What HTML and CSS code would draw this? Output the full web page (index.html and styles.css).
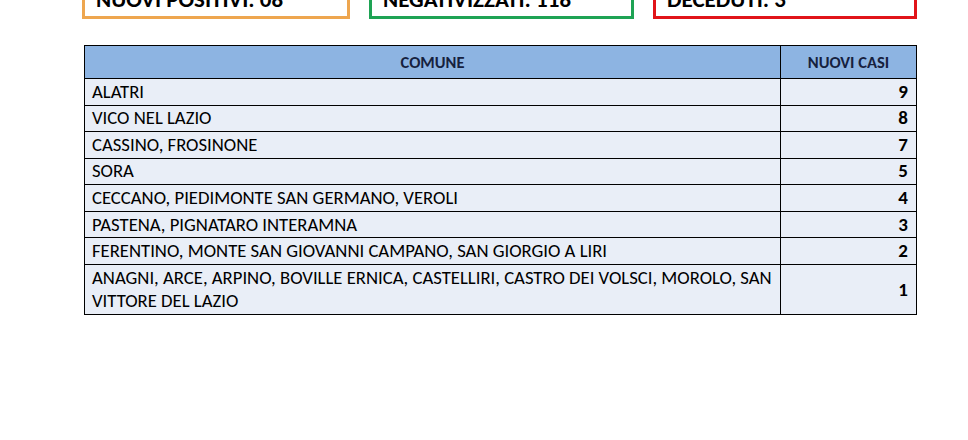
FILE: index.html
```html
<!DOCTYPE html>
<html lang="it">
<head>
<meta charset="utf-8">
<title>Nuovi casi per comune</title>
<link rel="stylesheet" href="styles.css">
</head>
<body>
<div class="page">
  <div class="boxes">
    <div class="box box-orange">NUOVI POSITIVI: 08</div>
    <div class="box box-green">NEGATIVIZZATI: 118</div>
    <div class="box box-red">DECEDUTI: 3</div>
  </div>
  <table class="cases">
    <colgroup><col class="col-name"><col class="col-num"></colgroup>
    <thead>
      <tr><th>COMUNE</th><th>NUOVI CASI</th></tr>
    </thead>
    <tbody>
      <tr><td>ALATRI</td><td class="num">9</td></tr>
      <tr><td>VICO NEL LAZIO</td><td class="num">8</td></tr>
      <tr><td>CASSINO, FROSINONE</td><td class="num">7</td></tr>
      <tr><td>SORA</td><td class="num">5</td></tr>
      <tr><td>CECCANO, PIEDIMONTE SAN GERMANO, VEROLI</td><td class="num">4</td></tr>
      <tr><td>PASTENA, PIGNATARO INTERAMNA</td><td class="num">3</td></tr>
      <tr><td>FERENTINO, MONTE SAN GIOVANNI CAMPANO, SAN GIORGIO A LIRI</td><td class="num">2</td></tr>
      <tr class="tall"><td>ANAGNI, ARCE, ARPINO, BOVILLE ERNICA, CASTELLIRI, CASTRO DEI VOLSCI, MOROLO, SAN VITTORE DEL LAZIO</td><td class="num">1</td></tr>
    </tbody>
  </table>
</div>
</body>
</html>
```
FILE: styles.css
```css
html, body {
  margin: 0;
  padding: 0;
  background: #ffffff;
}
body {
  font-family: Carlito, "Open Sans", "Liberation Sans", sans-serif;
  color: #000;
}
.page {
  width: 968px;
  height: 440px;
  overflow: hidden;
}
.boxes {
  display: flex;
  gap: 19px;
  padding-left: 82px;
  margin-top: -22px;
}
.box {
  box-sizing: border-box;
  height: 41px;
  border: 3px solid;
  padding: 6px 0 0 11px;
  font-size: 23px;
  font-weight: 700;
  line-height: 24px;
  color: #000;
}
.box-orange { width: 268px; border-color: #eea64f; }
.box-green { width: 265px; border-color: #1ea354; }
.box-red { width: 264px; border-color: #e11419; }

.cases {
  margin: 26px 0 0 84px;
  border-collapse: collapse;
  width: 832px;
  table-layout: fixed;
  font-size: 18.7px;
}
.col-name { width: 696px; }
.col-num { width: 136px; }
.cases th, .cases td {
  border: 1px solid #000;
  padding: 0 2px 0 7px;
}
.cases th {
  background: #8db4e2;
  height: 32px;
  font-size: 16.5px;
  font-weight: 700;
  color: #16213e;
  text-align: center;
  padding: 0 7px;
}
.cases td {
  background: #e9eef7;
  height: 25.57px;
  line-height: 22px;
}
.cases td.num {
  text-align: right;
  font-weight: 700;
  font-size: 19px;
  padding-right: 8px;
}
.cases tr.tall td {
  height: 49px;
  line-height: 23px;
}
```
